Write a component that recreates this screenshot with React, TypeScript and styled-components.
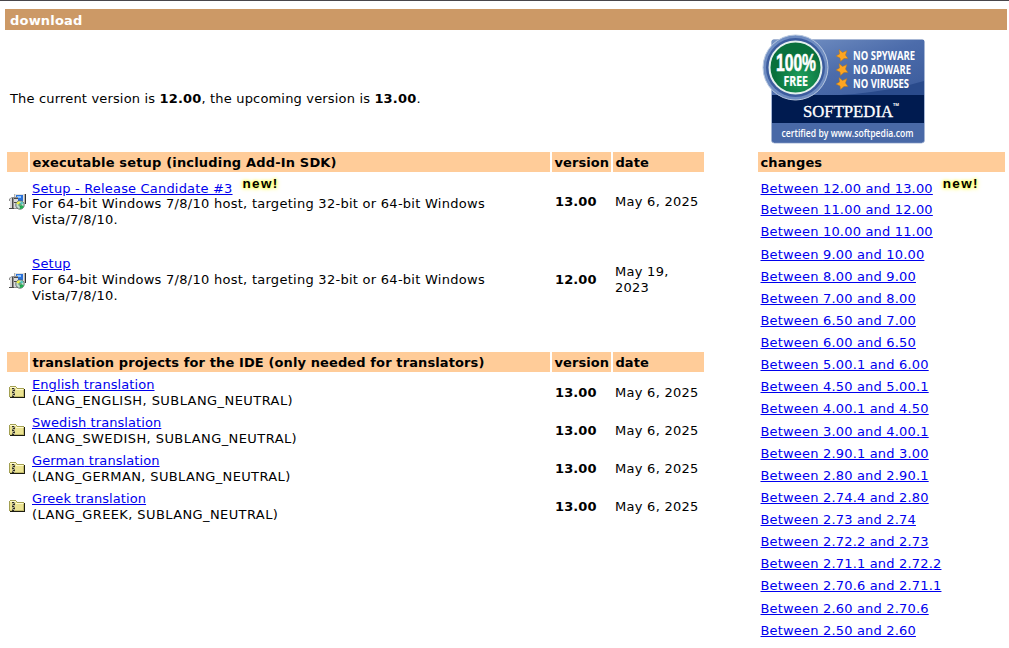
import React from "react";
import styled, { createGlobalStyle } from "styled-components";

const GlobalStyle = createGlobalStyle`
  body {
    margin: 0;
    background: #fff;
    color: #000;
    font: 13px/16px Verdana, "DejaVu Sans", sans-serif;
    overflow: hidden;
  }
`;

const Page = styled.div`
  box-sizing: border-box;
  width: 1009px;
  height: 648px;
  border-top: 1px solid #48464a;
  padding: 8px 2px 0 5px;
  overflow: hidden;
`;

const TitleBar = styled.h1`
  box-sizing: border-box;
  margin: 0;
  height: 21px;
  padding: 1px 0 0 5px;
  background: #cc9966;
  color: #fff;
  font-size: 13px;
  line-height: 21px;
  letter-spacing: 0.2px;
`;

const Intro = styled.div`
  display: flex;
  align-items: flex-start;
  justify-content: space-between;
  height: 118px;
  padding: 4px 81px 0 5px;
`;

const IntroText = styled.p`
  margin: 0;
  padding-top: 57px;
  letter-spacing: 0.17px;
`;

const Columns = styled.div`
  display: grid;
  grid-template-columns: 697px 247px;
  column-gap: 54px;
  padding-left: 2px;
`;

const Table = styled.section<{ $height?: number }>`
  display: grid;
  grid-template-columns: 21px 520px 59px 91px;
  column-gap: 2px;
  align-content: start;
  height: ${(p) => (p.$height ? p.$height + "px" : "auto")};
`;

const HeadCell = styled.div<{ $track?: number }>`
  box-sizing: border-box;
  height: 20px;
  padding-left: 2.4px;
  background: #ffcc99;
  font-weight: bold;
  line-height: 21px;
  white-space: nowrap;
  letter-spacing: ${(p) => p.$track ?? 0.14}px;
`;

const Row = styled.div<{ $height: number; $gap: number }>`
  display: grid;
  grid-column: 1 / -1;
  grid-template-columns: subgrid;
  align-items: center;
  height: ${(p) => p.$height}px;
  margin-top: ${(p) => p.$gap}px;
`;

const IconCell = styled.div`
  padding-left: 2px;
  height: 17px;
  svg {
    display: block;
  }
`;

const TextCell = styled.div<{ $drop?: number; $track?: number }>`
  padding: ${(p) => (p.$drop ?? 0) * 2}px 0 0 2px;
  letter-spacing: ${(p) => p.$track ?? 0.27}px;
  white-space: nowrap;
`;

const VersionCell = styled(TextCell)`
  padding-left: 3px;
  font-weight: bold;
`;

const Link = styled.a<{ $track?: number }>`
  color: #0000ee;
  text-decoration: underline;
  letter-spacing: ${(p) => p.$track ?? 0.18}px;
`;

const LinkLine = styled.div<{ $height: number }>`
  display: flex;
  align-items: flex-start;
  height: ${(p) => p.$height}px;
`;

const Badge = styled.span`
  margin: -5px 0 0 10px;
  font: bold 13.5px/16px "Liberation Sans", Arial, sans-serif;
  letter-spacing: 1.3px;
  text-shadow: 0 0 2px #ffff66, 0 0 3px #ffff66, 1px 1px 4px #ffff66, -1px 0 4px #ffff88;
`;

const ChangeList = styled.div`
  padding: 9.2px 0 0 2.5px;
`;

const InstallerIcon = () => (
  <svg width="17" height="17" viewBox="0 0 17 17">
    <path d="M5 1h11v10H5z" fill="#b4b4b0" />
    <path d="M6 1h9v8H6z" fill="#e2e2de" />
    <path d="M7 2h7v6H7z" fill="#2a70d8" />
    <path d="M8 3h4v2H8z" fill="#8cc4ff" />
    <path d="M16 1h1v10h-1z" fill="#303030" />
    <path d="M0 6l3-2h6v12H1V8H0z" fill="#909090" />
    <path d="M1 6l2-1v10H1zM5 6h4v9H5z" fill="#dadada" />
    <path d="M3 5h1v11H3zM0 15h5v1H0zM5 5h4v1H5zM5 9h3v1H5z" fill="#484848" />
    <circle cx="11" cy="12" r="4.2" fill="#c4dcd0" stroke="#485450" strokeWidth=".8" />
    <path d="M11 12L7.200 10.500a4 4 0 0 1 3.300-2.300z" fill="#eef040" />
    <path d="M11 12l3.800 1a4 4 0 0 1-4 3z" fill="#20b050" />
    <path d="M11 12l1-3.700 2.700 2z" fill="#50c8c0" />
    <circle cx="11" cy="12" r="1.1" fill="#fff" stroke="#107038" strokeWidth=".8" />
  </svg>
);

const ZipIcon = () => (
  <svg width="17" height="17" viewBox="0 0 17 17" shapeRendering="crispEdges">
    <path d="M1 3h6v1h8v9H1z" fill="#ece493" />
    <path d="M0 3h1v10H0zM1 2h6v1H1zM7 3h1v1H7zM8 4h7v1H8z" fill="#a3a052" />
    <path d="M1 3h6v1H1zM7 5h7v1H7z" fill="#fffbd0" />
    <path d="M15 5h1v9h-1zM1 13h15v1H1z" fill="#1c1c10" />
    <path d="M14 6h1v7h-1zM1 12h13v1H1z" fill="#c4bc6c" />
    <path d="M3 4h3v9H3z" fill="#b9b58c" />
    <path d="M3 4h2v1H3zM4 6h2v1H4zM3 8h2v1H3zM4 10h2v1H4zM3 12h2v1H3z" fill="#2c2c24" />
    <path d="M5 5h1v1H5zM3 7h1v1H3zM5 9h1v1H5zM3 11h1v1H3z" fill="#777560" />
  </svg>
);

const Star = ({ y }: { y: number }) => (
  <path
    transform={`translate(80 ${y})`}
    d="M-3-6L.5-3 5-5 3.5-.5 6 3 2 3-1.5 6-2 2.5-6 .5-2.5-1.5z"
    fill="#ffa51f"
    stroke="#a87529"
    strokeWidth=".5"
  />
);

const Logo = styled.svg`
  flex: none;
  overflow: visible;
`;

const SoftpediaLogo = () => (
  <Logo width="164" height="112" viewBox="0 0 164 112">
    <defs>
      <linearGradient id="panel" x1="0" y1="0" x2="1" y2="1">
        <stop offset="0" stopColor="#7794c5" />
        <stop offset=".5" stopColor="#4c6cab" />
        <stop offset="1" stopColor="#3a5a9a" />
      </linearGradient>
      <radialGradient id="seal" cx=".6" cy=".7">
        <stop offset="0" stopColor="#1f9f5c" />
        <stop offset="1" stopColor="#08703c" />
      </radialGradient>
    </defs>
    <rect x="9.5" y="5.5" width="153" height="103.5" rx="3" fill="#3f60a0" stroke="#a7b7d5" />
    <path d="M10 6h152v56H10z" fill="url(#panel)" />
    <path d="M46 62q65 0 116-15v15z" fill="#294a8b" />
    <path d="M10 61h152v28H10z" fill="#001b50" />
    <path d="M10 89h152v16.500q0 3-3 3H13q-3 0-3-3z" fill="#4969a7" />
    <circle cx="33.5" cy="33.5" r="32.500" fill="#6f8dc2" stroke="#b8c8e0" />
    <circle cx="33.5" cy="33.5" r="29.500" fill="#3c5c9e" />
    <circle cx="33.5" cy="33.5" r="26" fill="url(#seal)" stroke="#e4f0ef" strokeWidth="2" />
    <g fill="#fff" fontFamily="Open Sans, sans-serif" fontWeight="bold">
      <text x="14" y="37" fontFamily="Liberation Sans, sans-serif" fontSize="24" textLength="40" lengthAdjust="spacingAndGlyphs" stroke="#fff" strokeWidth=".6">100%</text>
      <text x="21.500" y="52" fontSize="14" textLength="24.500" lengthAdjust="spacingAndGlyphs" stroke="#fff" strokeWidth=".2">FREE</text>
      <g fontSize="11.5" fontWeight="700">
        <text x="91" y="25.500" textLength="62" lengthAdjust="spacingAndGlyphs">NO SPYWARE</text>
        <text x="91" y="39.500" textLength="58" lengthAdjust="spacingAndGlyphs">NO ADWARE</text>
        <text x="91" y="53.500" textLength="56" lengthAdjust="spacingAndGlyphs">NO VIRUSES</text>
      </g>
      <text x="41" y="82.500" fontFamily="Liberation Serif, serif" fontWeight="normal" fontSize="16" textLength="90" lengthAdjust="spacingAndGlyphs" stroke="#fff" strokeWidth=".3">SOFTPEDIA</text>
      <text x="131" y="72" fontSize="4">TM</text>
      <text x="19.500" y="103" fontSize="10.5" fontWeight="600" textLength="132" lengthAdjust="spacingAndGlyphs">certified by www.softpedia.com</text>
    </g>
    <Star y={21.5} />
    <Star y={35.5} />
    <Star y={49.5} />
  </Logo>
);

const setups = [
  { name: "Setup - Release Candidate #3", version: "13.00", date: ["May 6, 2025"], isNew: true, height: 54, gap: 2 },
  { name: "Setup", version: "12.00", date: ["May 19,", "2023"], isNew: false, height: 52, gap: 26 },
];

const translations = [
  { name: "English", code: "ENGLISH", track: 0.43 },
  { name: "Swedish", code: "SWEDISH", track: 0.43 },
  { name: "German", code: "GERMAN", track: 0.36 },
  { name: "Greek", code: "GREEK", track: 0.4 },
];

const changes = [
  "12.00 and 13.00", "11.00 and 12.00", "10.00 and 11.00", "9.00 and 10.00", "8.00 and 9.00",
  "7.00 and 8.00", "6.50 and 7.00", "6.00 and 6.50", "5.00.1 and 6.00", "4.50 and 5.00.1",
  "4.00.1 and 4.50", "3.00 and 4.00.1", "2.90.1 and 3.00", "2.80 and 2.90.1", "2.74.4 and 2.80",
  "2.73 and 2.74", "2.72.2 and 2.73", "2.71.1 and 2.72.2", "2.70.6 and 2.71.1", "2.60 and 2.70.6",
  "2.50 and 2.60",
];

const TableHead = ({ title, track }: { title: string; track: number }) => (
  <>
    <HeadCell />
    <HeadCell $track={track}>{title}</HeadCell>
    <HeadCell $track={0.1}>version</HeadCell>
    <HeadCell>date</HeadCell>
  </>
);

export default function App() {
  return (
    <Page>
      <GlobalStyle />
      <TitleBar>download</TitleBar>
      <Intro>
        <IntroText>
          The current version is <b>12.00</b>, the upcoming version is <b>13.00</b>.
        </IntroText>
        <SoftpediaLogo />
      </Intro>
      <Columns>
        <div>
          <Table $height={200}>
            <TableHead title="executable setup (including Add-In SDK)" track={0.17} />
            {setups.map((s) => (
              <Row key={s.name} $height={s.height} $gap={s.gap}>
                <IconCell><InstallerIcon /></IconCell>
                <TextCell $drop={s.isNew ? 3 : 0}>
                  <LinkLine $height={s.isNew ? 15 : 16}>
                    <Link>{s.name}</Link>
                    {s.isNew && <Badge>new!</Badge>}
                  </LinkLine>
                  For 64-bit Windows 7/8/10 host, targeting 32-bit or 64-bit Windows
                  <br />
                  Vista/7/8/10.
                </TextCell>
                <VersionCell $drop={s.isNew ? 1 : 0} $track={0.1}>{s.version}</VersionCell>
                <TextCell $drop={s.isNew ? 1 : 0}>
                  {s.date.map((part) => (
                    <div key={part}>{part}</div>
                  ))}
                </TextCell>
              </Row>
            ))}
          </Table>
          <Table>
            <TableHead title="translation projects for the IDE (only needed for translators)" track={0.11} />
            {translations.map((t) => (
              <Row key={t.name} $height={36} $gap={2}>
                <IconCell><ZipIcon /></IconCell>
                <TextCell $drop={1} $track={t.track}>
                  <Link $track={0.08}>{t.name} translation</Link>
                  <br />
                  (LANG_{t.code}, SUBLANG_NEUTRAL)
                </TextCell>
                <VersionCell $drop={1} $track={0.1}>13.00</VersionCell>
                <TextCell $drop={1}>May 6, 2025</TextCell>
              </Row>
            ))}
          </Table>
        </div>
        <div>
          <HeadCell>changes</HeadCell>
          <ChangeList>
            {changes.map((c, i) => (
              <LinkLine key={c} $height={i === 0 ? 21.125 : 22.125}>
                <Link>Between {c}</Link>
                {i === 0 && <Badge>new!</Badge>}
              </LinkLine>
            ))}
          </ChangeList>
        </div>
      </Columns>
    </Page>
  );
}
